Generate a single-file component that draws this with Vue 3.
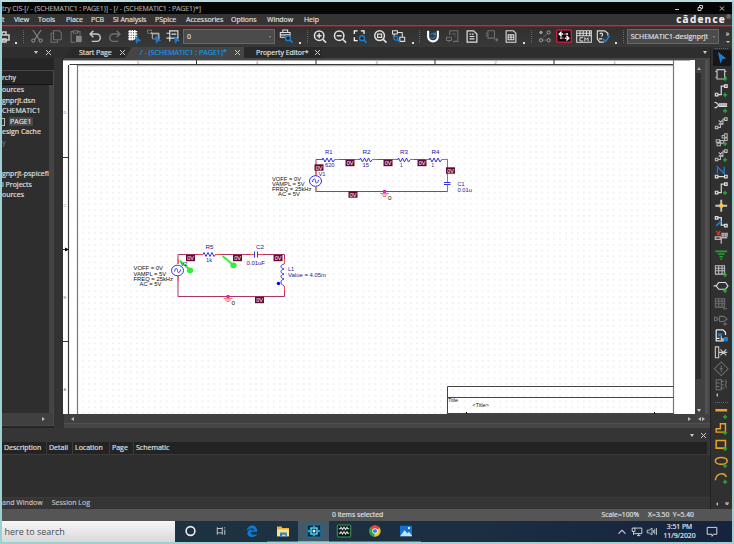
<script setup>
const L = '#dedede'
const D = '#707070'
const B = '#1c7ccc'
const G = '#25b32c'

const plus = `<path d="M10 13h5M12.500 10.500v5" stroke="${G}" stroke-width="1.500"/>`
const pointer = `<path d="M10 8l6 5-3 .4-2 3z" fill="${B}" stroke="${B}"/>`
const lens = `<circle cx="10.500" cy="10" r="3" fill="#222" stroke="${B}" stroke-width="1.800"/><path d="M13 12.500l3 3" stroke="${B}" stroke-width="2.200"/>`

const icons = {
  cut: `<g stroke="#8b8b8b" stroke-width="1.300"><path d="M3 0l8 12M13 0L5 12"/><circle cx="3.500" cy="13" r="2"/><circle cx="12.500" cy="13" r="2"/></g>`,
  copy: `<path d="M5 1h7l2.500 2.500V12H5zM5 4H2v11h8v-3" stroke="${D}" stroke-width="1.300"/>`,
  paste: `<path d="M5 2H2v13h5M10 2h3v4M5 1h5v3H5z" stroke="${D}" stroke-width="1.300"/><path d="M8 7h7v8H8z" fill="#858585"/>`,
  undo: `<path d="M6 1L2 5l4 4M2 5h8a4.500 4.500 0 0 1 0 9H4" stroke="#c9c9c9" stroke-width="1.800"/>`,
  redo: `<path d="M10 1l4 4-4 4M14 5H6a4.500 4.500 0 0 0 0 9h6" stroke="${D}" stroke-width="1.800"/>`,
  gridSnap: `<path d="M1 2h11M1 5h11M1 8h11M1 11h8M3 0v13M6 0v13M9 0v11" stroke="#fff" stroke-width="1.700"/>${pointer}`,
  areaSel: `<path d="M4 4h10v8M6 10V4" stroke="${L}" stroke-width="1.200"/><path d="M0 0h5v4H0z" stroke="#aaa" stroke-dasharray="1.500 1"/><path d="M6 5h7v6H6z" stroke="#999"/>${pointer}`,
  partSel: `<path d="M4 0v14M4 1h10v9H4M0 4h4M0 10h4M4 4h-3M6 5h6" stroke="${L}" stroke-width="1.400"/>${pointer}`,
  findPart: `<path d="M1 3h12v6H1zM4 3V0h6v3M1 6h12" stroke="${L}" stroke-width="1.300"/>${lens}`,
  zoomIn: `<circle cx="7" cy="7" r="5.800" stroke="${L}" stroke-width="1.900"/><path d="M11.500 11.500l4 4M4 7h6M7 4v6" stroke="${L}" stroke-width="1.900"/>`,
  zoomOut: `<circle cx="7" cy="7" r="5.800" stroke="${L}" stroke-width="1.900"/><path d="M11.500 11.500l4 4M4 7h6" stroke="${L}" stroke-width="1.900"/>`,
  zoomArea: `<path d="M1 5V1h4M9 1h4v4M1 9v4h4" stroke="#fff" stroke-width="1.500"/>${lens}`,
  zoomFit: `<circle cx="7.500" cy="7" r="6" stroke="${L}" stroke-width="1.800"/><path d="M12 11.500l4 4" stroke="${L}" stroke-width="2"/><path d="M5 5h5v4H5z" stroke="${L}" stroke-width="1.500"/>`,
  zoomSel: `<path d="M0 1h6v4H0zM9 9h6v5H9zM6 3h6v6M2 5v4" stroke="${L}" stroke-width="1.300"/><circle cx="4" cy="10" r="2.500" stroke="${B}" stroke-width="1.700"/><path d="M6 12l3 3" stroke="${B}" stroke-width="2"/>`,
  udesign: `<path d="M2 1v7a6 6 0 0 0 12 0V1" stroke="#fff" stroke-width="2.600"/><path d="M5 6a3.500 3 0 0 1 6-1M11 8a3.500 3 0 0 1-6 1M11 3v3H8" stroke="${B}" stroke-width="1.500"/>`,
  netlist: `<path d="M4 1h10v13H8M4 1v5M7 5h4M11 8h1M0 9h6v4H0zM3 13v2" stroke="${D}" stroke-width="1.300"/>`,
  report: `<path d="M2 1h8l4 4v10H2z" stroke="${L}" stroke-width="1.500"/><path d="M5 5h2M8 5h2M5 8h6M5 11h6" stroke="${L}" stroke-width="1.500"/>`,
  crossRef: `<path d="M3 1h8v9H3zM0 4h3M0 7h3M11 12h4l-2-2M15 12l-2 2" stroke="${D}" stroke-width="1.300"/>`,
  bom: `<path d="M2 1h9l3 3v11H2z" stroke="${L}" stroke-width="1.300"/><path d="M4.500 6h7v6h-7zM4.500 9h7M8 6v6" stroke="${L}" stroke-width="1.300"/>`,
  nets: `<g stroke="#b5b5b5"><circle cx="3" cy="3" r="1.500" fill="#888"/><circle cx="12.500" cy="3" r="2"/><circle cx="3" cy="12.500" r="2"/><circle cx="12.500" cy="12.500" r="2"/><path d="M6 9l4-4M6 12.500h4" stroke-dasharray="1 1"/></g>`,
  swap: `<rect x="-1" y="0" width="18" height="15" rx="1" fill="#050b12" stroke="#c41c3d" stroke-width="1.800"/><path d="M5 2L2 5l3 3M11 7l3 3-3 3M2 5h5M9 10h5M10 5h3M3 10h3" stroke="#fff" stroke-width="1.700"/><path d="M8 5h3M5 10h3" stroke="#cf2940" stroke-width="1.500"/>`,
  cm: `<path d="M-1 1h18v14H-1zM-1 4h18M-1 7h18M3 1v6M7 1v6M11 1v6M15 1v6" stroke="${L}" stroke-width="1.300"/><path d="M7 9.500H3v4h4M9 14V9.500l2 2 2-2V14" stroke="${L}" stroke-width="1.200"/>`,
  check: `<path d="M10 1H1v10l3 4h5M10 1l4 3v3M4 5c3-3 5 1 2 3M3 11h4" stroke="${L}" stroke-width="1.400"/><path d="M8 11l3 3 5-7" stroke="${B}" stroke-width="2"/>`,
  arrow: `<path d="M4 1l10 8-4.500 .5L7 15z" fill="${B}"/>`,
  part: `<path d="M3 2h9v11H3zM1 4h2M1 11h2M12 4h2M12 11h2" stroke="#c0c0c0" stroke-width="1.400"/>${plus}`,
  wire: `<path d="M1 11h3v3H1zM12 1h3v3h-3zM4 12.500h4v-10h4" stroke="${L}" stroke-width="1.400"/>${plus}`,
  bus: `<path d="M0 3h2l3 3h10M0 9h2l3-3M5 4.500h10M5 7.500h10" stroke="${L}" stroke-width="1.300"/>${plus}`,
  autoWire: `<path d="M1 11h3v3H1zM12 1h3v3h-3zM4 12.500h3v-4h3v-6h2M5 4l5 5M9 4l-4 5" stroke="#c0c0c0" stroke-width="1.200"/>`,
  autoPlus: `<path d="M1 11h3v3H1zM12 1h3v3h-3zM4 12.500h3v-4h3v-6h2M5 4l5 5M9 4l-4 5" stroke="#c0c0c0" stroke-width="1.200"/>${plus}`,
  blocks: `<path d="M2 8h4v3H2zM7 9h4v3H7zM3 12h4v3H3zM9 3h3v3H9zM12 1h3v4h-3zM12 6h3v3h-3z" stroke="#b8b8b8" stroke-width="1.200"/>${plus}`,
  netAlias: `<path d="M3.500 9V1l8 8V1" stroke="${B}" stroke-width="1.600"/><path d="M1 11h3v3H1zM12 11h3v3h-3zM4 12.500h8" stroke="${L}" stroke-width="1.400"/>`,
  junction: `<path d="M8 1v5M8 10v5M1 8h5M10 8h5" stroke="#c8c8c8" stroke-width="2.200"/><circle cx="8" cy="8" r="2.700" fill="#ffc43d"/>`,
  busEntry: `<path d="M1 2h3v3H1zM4 3h4v9h4M12 11h3v3h-3z" stroke="${L}" stroke-width="1.500"/><path d="M2 13l6-6" stroke="${B}" stroke-width="2"/>`,
  power: `<path d="M2 0l5 5M7 0L3 5" stroke="#df3528" stroke-width="1.700"/><path d="M1 7h6v3H1zM9 3h2v3H9zM13 3h2v3h-2zM7 8h8M8 9v6" stroke="#b0b0b0" stroke-width="1.600"/>`,
  ground: `<path d="M1 4h14M4 7.200h8M6 10.300h4M7 13.400h2" stroke="#1fa628" stroke-width="1.800"/>`,
  hier: `<path d="M1 2h11v10H1zM1 5h11M1 8h11M5 2v10M9 2v10" stroke="#c0c0c0" stroke-width="1.200"/>${plus}`,
  port: `<path d="M-1 7h3l3-4h8l3 4-3 4H5L2 7" stroke="${L}" stroke-width="1.300"/>${plus}`,
  hierDim: `<path d="M1 2h11v10H1zM1 5h11M1 8h11M5 2v10M9 2v10M10 14h5" stroke="${D}" stroke-width="1.200"/>`,
  pinDim: `<path d="M0 5h3v4H0zM3 7h3M6 4h5l4 3-4 3H6zM10 13h5M12.500 11v4" stroke="${D}" stroke-width="1.200"/>`,
  offpage: `<path d="M2 1h8l3 3v3M2 1v13h9M2 11h4" stroke="#e8e8e8" stroke-width="1.500"/><path d="M8 8v4h4" stroke="#eee" stroke-width="1.200"/><path d="M4 5h5v4H4zM11 9.500h5v5h-5z" fill="${B}"/>`,
  noConn: `<path d="M1 1h4v13H1zM5 7.500h10M7 4l7 7M14 4l-7 7" stroke="#c8c8c8" stroke-width="1.300"/>`,
  diamond: `<path d="M8 0l8 8-8 8-8-8zM8 4v8M6 8h4" stroke="${D}" stroke-width="1.200"/>`,
  pinArray: `<path d="M2 2h6v12H2zM8 4h3M8 8h3M8 12h3M2 6h4M2 10h4M13 2l1 3-1 3 1 4" stroke="${D}" stroke-width="1.200"/>`,
  line: `<path d="M1 5h14" stroke="#e8a22a" stroke-width="3"/>${plus}`,
  polyline: `<path d="M7 2h6v10H2V8h5z" stroke="#e8a22a" stroke-width="1.700"/>${plus}`,
  rect: `<path d="M2 3h11v9H2z" stroke="#e8a22a" stroke-width="1.800"/>${plus}`,
  ellipse: `<ellipse cx="8" cy="7" rx="7" ry="4" stroke="#e8a22a" stroke-width="1.800"/>${plus}`,
  arc: `<path d="M1 11c1-9 11-10 13-4" stroke="#e8a22a" stroke-width="1.700"/>${plus}`,
  cortana: `<circle cx="8" cy="8" r="5" stroke="#eee" stroke-width="1.800"/>`,
  taskview: `<path d="M2 2v12M10 2v12M2 4h8M2 11h8M14 6v8M14 2v2" stroke="#ccc" stroke-width="1.500"/>`,
  edge: `<path d="M1 8C2-2 15-2 15 9H6c1 6 6 4 8 3v2C7 19-1 14 3 8c1-2 3-3 5-3C5 4 3 5 1 8" fill="#0c7ad8"/><path d="M6 7c0-3 5-3 5 0z" fill="#1d303e"/>`,
  explorer: `<path d="M0 2h6l1 2h9v11H0z" fill="#efb63c"/><path d="M0 6h16v9H0z" fill="#ffe08a"/><path d="M4 10h9v6h-2v-3H7v3H4z" fill="#2f82ce"/>`,
  capture: `<rect x="-1" width="18" height="16" rx="1" fill="#062b42" stroke="#1688b5"/><path d="M4 4h8v8H4z" stroke="#5bd1ee" stroke-width="2"/><path d="M8 1v3M8 12v3M0 8h4M12 8h4" stroke="#27a7d5" stroke-width="3"/><circle cx="8" cy="8" r="2" fill="#dff8ff"/>`,
  pspice: `<rect x="-1" y="0" width="18" height="16" rx="1" fill="#071d1c" stroke="#48a35a" stroke-width="1.200"/><path d="M1 5h2l1-2 2 3 2-3 2 3 2-3 1 2h2M1 11h2l1-2 2 3 2-3 2 3 2-3 1 2h2" stroke="#e5e5e5" stroke-width="1.400"/>`,
  chrome: `<circle cx="8" cy="8" r="7.500" fill="#f5c62d"/><path d="M8 8L1.500 4A7.500 7.500 0 0 1 14.500 4z" fill="#e24335"/><path d="M8 8L1.500 4A7.500 7.500 0 0 0 7 15.500z" fill="#2ba24c"/><circle cx="8" cy="8" r="3.600" fill="#fff"/><circle cx="8" cy="8" r="2.800" fill="#3c7fe8"/>`,
  photos: `<path d="M0 1h16v14H0z" fill="#1670ce"/><path d="M0 15l6-8 4 4 2-2 4 5v1z" fill="#bfe5fb"/><circle cx="12" cy="4" r="1.500" fill="#fff"/>`,
  network: `<path d="M4 3h11v8H4M8 14h5M10.500 11v3M1 3h4v5H1zM3 8v5" stroke="#ddd" stroke-width="1.300"/>`,
  volume: `<path d="M1 6h3l4-3v10L4 10H1zM10 6v4M12 4v8M14.500 3v10" stroke="#ddd" stroke-width="1.200"/>`,
  caret: `<path d="M3 11l5-5 5 5" stroke="#ddd" stroke-width="1.500"/>`,
  notify: `<path d="M1 2h14v10h-5l-2 3v-3H1z" stroke="#ddd" stroke-width="1.400"/>`
}

const menu = ['View', 'Tools', 'Place', 'PCB', 'SI Analysis', 'PSpice', 'Accessories', 'Options', 'Window', 'Help']
const editTools = ['cut', 'copy', 'paste', 'undo', 'redo', 'gridSnap', 'areaSel', 'partSel']
const zoomTools = ['zoomIn', 'zoomOut', 'zoomArea', 'zoomFit', 'zoomSel']
const netTools = ['udesign', 'netlist', 'report', 'crossRef', 'bom']
const checkTools = ['nets', 'swap', 'cm', 'check']
const drawTools = ['arrow', 'part', 'wire', 'bus', 'autoWire', 'blocks', 'autoPlus', 'netAlias', 'wire', 'junction', 'busEntry', 'power', 'ground', 'hier', 'port', 'hierDim', 'pinDim', 'offpage', 'noConn', 'diamond', 'pinArray']
const shapeTools = ['line', 'polyline', 'rect', 'ellipse', 'arc']
const apps = ['cortana', 'taskview', 'edge', 'explorer', 'capture', 'pspice', 'chrome', 'photos']

const tree = [
  { t: 'ources' }, { t: 'gnprjt.dsn' }, { t: 'CHEMATIC1' }, { t: 'PAGE1', page: true },
  { t: 'esign Cache' }, { t: 'y', dim: true }, { t: '' }, { t: '' },
  { t: 'gnprjt-pspicefi' }, { t: 'l Projects' }, { t: 'ources' }
]
const columns = [['Description', 45], ['Detail', 26], ['Location', 37], ['Page', 24], ['Schematic', 50]]

const zigzags = [[322, 160], [359.500, 160], [397.500, 160], [429, 160], [203, 254.500]]
const zig = ([x, y]) => `M${x} ${y}l1 -2 2 4 2 -4 2 4 2 -4 2 4 1.500 -2`
const markers = [[319, 167.500], [350, 163], [388, 163], [422, 163], [450.500, 170.500], [353, 194.500], [190.500, 258], [237.500, 258], [278, 258], [259.500, 300]]
const names = [
  ['R1', 325, 154, 7.500], ['R2', 362.500, 154, 8], ['R3', 400, 154, 8], ['R4', 431.500, 154, 8],
  ['620', 325, 167.300, 9.500], ['15', 362.500, 167.300, 6.500], ['1', 400, 167.300, 2.500], ['1', 431.500, 167.300, 2.500],
  ['V1', 318.500, 175.500, 7], ['C1', 457.500, 186, 7], ['0.01u', 457.500, 192, 14.500],
  ['R5', 205.500, 249, 8], ['1k', 206, 262, 6], ['V2', 180.500, 265.500, 7], ['C2', 256, 249, 8],
  ['0.01uF', 246.500, 265, 18.500], ['L1', 288, 270.500, 6], ['Value = 4.05m', 288, 276.500, 38]
]
const notes = [
  ['VOFF = 0V', 272, 180.500, 29], ['VAMPL = 5V', 272, 186, 32.500], ['FREQ = 25kHz', 272, 191, 39.500], ['AC = 5V', 278, 196.300, 22],
  ['VOFF = 0V', 133.500, 270, 29.500], ['VAMPL = 5V', 133.500, 275.500, 32.500], ['FREQ = 25kHz', 133.500, 281, 39.500], ['AC = 5V', 139.500, 286, 22],
  ['0', 388, 200, 3.500], ['0', 231.500, 305, 3.500], ['Title', 448, 402, 10], ['<Title>', 472.500, 407.300, 16.500]
]
const rulerTop = [['5', 138], ['4', 257], ['3', 376.500], ['2', 495.500], ['1', 614.500]]
const rulerLeft = [['D', 114], ['C', 206.500], ['B', 299], ['A', 391]]
</script>

<template>
  <div class="window">
    <header class="titlebar">
      <span class="title">try CIS-[/ - (SCHEMATIC1 : PAGE1)] - [/ - (SCHEMATIC1 : PAGE1)*]</span>
      <svg class="winctl" width="52" height="10" fill="none" stroke="#ccc">
        <path d="M2 6.500h4M25 4.500h3v3h-3zM26.500 4v-1.500h3v3h-1.500M47 3.500l4 4M51 3.500l-4 4" />
      </svg>
    </header>

    <nav class="menubar">
      <span class="stub">t</span>
      <span v-for="m in menu" :key="m" class="menu" :class="'m-' + m.toLowerCase().replace(' ', '-')">{{ m }}</span>
      <span class="brand">cādence<sup>®</sup></span>
    </nav>

    <div class="toolbar">
      <svg class="printer" width="9" height="12" fill="none" stroke="#d0d0d0" stroke-width="1.500">
        <path d="M-2 4h9v5h-9M0 4V1h4v3M0 8h4v3h-4z" />
      </svg>
      <i class="drop first"></i><i class="grip"></i>
      <div class="group edit">
        <span v-for="n in editTools" :key="n" class="slot"><svg viewBox="0 0 16 16" fill="none" v-html="icons[n]"></svg></span>
      </div>
      <div class="combo value"><span>0</span><i class="tri"></i></div>
      <span class="slot find"><svg viewBox="0 0 16 16" fill="none" v-html="icons.findPart"></svg></span>
      <i class="drop"></i><i class="grip"></i>
      <div class="group zoom">
        <span v-for="n in zoomTools" :key="n" class="slot"><svg viewBox="0 0 16 16" fill="none" v-html="icons[n]"></svg></span>
      </div>
      <i class="drop"></i><i class="grip"></i>
      <div class="group net">
        <span v-for="n in netTools" :key="n" class="slot"><svg viewBox="0 0 16 16" fill="none" v-html="icons[n]"></svg></span>
      </div>
      <i class="drop"></i><i class="grip"></i>
      <div class="group checks">
        <span v-for="n in checkTools" :key="n" class="slot"><svg viewBox="0 0 16 16" fill="none" v-html="icons[n]"></svg></span>
      </div>
      <i class="drop"></i><i class="grip"></i>
      <div class="combo design"><span>SCHEMATIC1-designprjt</span><i class="tri"></i></div>
      <div class="more"><span>»</span><i class="tri"></i></div>
    </div>

    <div class="body">
      <div class="main">
        <div class="tabs">
          <div class="dockhead"><i class="tri"></i><span class="x"></span></div>
          <div class="tab start"><span>Start Page</span><span class="x"></span></div>
          <div class="tab active"><span>/ - (SCHEMATIC1 : PAGE1)*</span><span class="x"></span></div>
          <div class="tab prop"><span>Property Editor*</span><span class="x"></span></div>
          <i class="tri end"></i>
        </div>

        <div class="work">
          <aside class="dock">
            <div class="panel">
              <div class="ptitle">rchy</div>
              <div class="pbody">
                <ul class="tree">
                  <li v-for="(r, i) in tree" :key="i" :class="{ page: r.page, dim: r.dim }"><i v-if="r.page"></i><span>{{ r.t }}</span></li>
                </ul>
                <div class="pscroll"></div>
              </div>
              <div class="pfoot"><i class="rt"></i></div>
            </div>
          </aside>

          <section class="editor">
            <div class="sheet">
              <svg class="canvas" width="632" height="354" viewBox="63 60 632 354" fill="none">
                <defs>
                  <pattern id="dots" x="80.300" y="68" width="5.960" height="5.800" patternUnits="userSpaceOnUse">
                    <rect x="2.400" y="2.300" width="1.100" height="1.100" fill="#d5d5d5" />
                  </pattern>
                </defs>
                <path d="M63 60h632v354H63z" fill="#fff" />
                <path d="M78 66h594v348H78z" fill="url(#dots)" />
                <path d="M63 60.500h627" stroke="#b0b0b0" />
                <path d="M69.500 64.500h604M68.500 65v349" stroke="#3c3c3c" stroke-width="1.200" />
                <path d="M77.500 65v349M673.500 60v354" stroke="#777" stroke-width="1.200" />
                <path d="M78 65.700h595" stroke="#777" stroke-width=".7" />
                <path d="M196.500 60v5M316 60v5M435 60v5M554 60v5M63 157.500h6M63 249.500h6M63 341.500h6" stroke="#333" />
                <path d="M65 247.500l4 2-4 2z" fill="#000" />
                <g class="ruler">
                  <text v-for="[t, x] in rulerTop" :key="t" :x="x - 1" y="63.500">{{ t }}</text>
                  <text v-for="[t, y] in rulerLeft" :key="t" x="63.500" :y="y">{{ t }}</text>
                </g>
                <path d="M447.500 414v-27.500h226M447.500 397.500h226M447.500 413.500h226" stroke="#444" />
                <path d="M466.500 412v2M654.500 412v2" stroke="#111" />

                <g stroke="#ad3464">
                  <path d="M316 176v-16.500h6M334.500 159.500h25M372 159.500h26M410 159.500h19M441.500 159.500h6V182M447.500 185v6.500H316V187" />
                  <path d="M178 264v-9.500h25M215.500 254.500h39M257.500 254.500h27V264M284.500 286v10.500H178V276" />
                </g>
                <g stroke="#f0504c">
                  <path d="M316 176v-9M316 192v-5M334.500 159.500h5M355 159.500h4M372 159.500h5M393 159.500h5M410 159.500h4M425 159.500h4M441.500 159.500h6V182M447.500 185v6" />
                  <path d="M178 264v-5M178 281v-5M198 254.500h5M215.500 254.500h5M250 254.500h4M258 254.500h5M284.500 264v-5M284.500 286v5" />
                </g>
                <g stroke="#3434dc" stroke-width="1">
                  <path v-for="(z, i) in zigzags" :key="i" :d="zig(z)" />
                  <ellipse cx="315.500" cy="181" rx="6" ry="5.300" />
                  <path d="M312.500 182c1-5 3-3 3-1s2 4 3-1" />
                  <ellipse cx="177.500" cy="270.500" rx="6" ry="5.300" />
                  <path d="M174.500 271.500c1-5 3-3 3-1s2 4 3-1" />
                  <path d="M444 182.500h6.500M444 184.500h6.500M254.500 251.500v6M257.500 251.500v6" />
                  <path d="M284 264c-4 1-4 4 0 5c-4 1-4 4 0 5c-4 1-4 4 0 5c-4 1-4 5 0 7" />
                </g>
                <circle cx="278.500" cy="283.500" r="1.700" fill="#0000ea" />
                <g stroke="#f07d78">
                  <path d="M380 193.500h9M381.500 195h6M383 196.500h3M223.500 298.500h9M225 300h6M226.500 301.500h3" />
                </g>
                <path d="M383 190h3v3h-3zM226.500 295h3v3h-3z" fill="#f214d4" />
                <g v-for="([x, y], i) in markers" :key="i">
                  <rect :x="x - 4.500" :y="y - 3.200" width="9" height="6.400" fill="#650832" />
                  <text class="zero" :x="x - 3.300" :y="y + 2.100" textLength="6.800" lengthAdjust="spacingAndGlyphs">0V</text>
                </g>
                <g stroke="#36ec38" stroke-width="1.800">
                  <path d="M179.500 260.500l9 8M222.500 256l9 7.500" />
                  <ellipse cx="190" cy="270.300" rx="2.300" ry="2" fill="#36ec38" />
                  <ellipse cx="233.500" cy="265.300" rx="2.300" ry="2" fill="#36ec38" />
                </g>
                <g class="probe"><text x="194" y="272">V+</text><text x="238" y="267">V-</text></g>
                <g class="name"><text v-for="([t, x, y, w], i) in names" :key="i" :x="x" :y="y" :textLength="w" lengthAdjust="spacingAndGlyphs">{{ t }}</text></g>
                <g class="note"><text v-for="([t, x, y, w], i) in notes" :key="i" :x="x" :y="y" :textLength="w" lengthAdjust="spacingAndGlyphs">{{ t }}</text></g>
              </svg>
              <div class="vscroll"><i class="up"></i><div class="thumb"></div><i class="tri"></i></div>
            </div>
            <div class="hscroll"><i class="lf"></i><i class="rt"></i><i class="lf second"></i><i class="rt"></i></div>
          </section>
        </div>

        <section class="output">
          <div class="ohead"><i class="tri"></i><span class="x"></span></div>
          <div class="cols"><span v-for="[c, w] in columns" :key="c" :style="{ width: w + 'px' }">{{ c }}</span></div>
          <div class="obody"></div>
          <div class="otabs"><span>and Window</span><span>Session Log</span></div>
        </section>
      </div>

      <aside class="palette">
        <i class="dash"></i>
        <span v-for="(n, i) in drawTools" :key="i" class="tool" :class="{ on: i === 0 }"><svg viewBox="0 0 16 16" fill="none" v-html="icons[n]"></svg></span>
        <i class="lf"></i><i class="dash low"></i>
        <span v-for="n in shapeTools" :key="n" class="tool"><svg viewBox="0 0 16 16" fill="none" v-html="icons[n]"></svg></span>
        <div class="pend"><i class="lf"></i><span>»</span></div>
      </aside>
    </div>

    <footer class="status"><span class="sel">0 items selected</span><span class="scale">Scale=100%</span><span>X=3.50&nbsp; Y=5.40</span></footer>

    <div class="taskbar">
      <div class="search">e here to search</div>
      <div class="apps">
        <span v-for="n in apps" :key="n" class="app" :class="n"><svg viewBox="0 0 16 16" fill="none" v-html="icons[n]"></svg></span>
      </div>
      <div class="tray">
        <svg v-for="n in ['caret', 'network', 'volume']" :key="n" viewBox="0 0 16 16" fill="none" v-html="icons[n]"></svg>
        <div class="clock"><span>3:51 PM</span><span>11/9/2020</span></div>
        <svg class="bell" viewBox="0 0 16 16" fill="none" v-html="icons.notify"></svg>
      </div>
    </div>
  </div>
</template>

<style>
body { margin: 0; background: #9fcccf; overflow: hidden; }
</style>

<style scoped>
* { box-sizing: border-box; }
.window { width: 734px; height: 544px; border: 2px solid #9fd0d1; border-top-color: #bcdde0; display: flex; flex-direction: column; background: #333; color: #e2e2e2; font: 7px/1 "Open Sans", "Noto Sans", sans-serif; -webkit-text-stroke: .15px currentColor; white-space: nowrap; overflow: hidden; }
.titlebar { height: 12px; flex: none; background: #050505; display: flex; justify-content: space-between; align-items: center; padding-right: 7px; color: #aaa; }
.title { letter-spacing: -.11px; }
.menubar { height: 12px; flex: none; display: flex; align-items: center; background: #343434; border-bottom: 1px solid #d8233f; box-shadow: 0 1px 0 rgba(190, 30, 55, .45); position: relative; }
.stub { width: 12px; }
.menu { width: 30px; flex: none; letter-spacing: -.05px; }
.m-view { width: 24px; }
.m-tools { width: 28px; }
.m-place { width: 25px; }
.m-pcb { width: 22px; }
.m-si-analysis { width: 42px; }
.m-pspice { width: 31px; }
.m-accessories { width: 45px; }
.m-options { width: 36px; }
.m-window { width: 37px; }
.brand { margin-left: auto; font: 700 10px/11px "Open Sans", sans-serif; letter-spacing: 1.25px; color: #eee; margin-right: 1px; }
.brand sup { font-size: 6px; line-height: 1px; color: #888; letter-spacing: 0; }
.toolbar { height: 21px; flex: none; display: flex; align-items: center; background: linear-gradient(#303030, #383838); }
.slot { width: 19.5px; flex: none; display: flex; justify-content: center; }
.slot svg { width: 14px; height: 13px; overflow: visible; }
.group { display: flex; flex: none; }
.zoom .slot { width: 19.75px; }
.find { margin-left: 1px; }
.printer { flex: none; }
.drop { width: 2px; height: 2px; background: #ddd; margin: 12px 6px 0 3px; flex: none; }
.drop.first { margin: 12px 6px 0 4px; }
.grip { width: 1px; height: 13px; flex: none; background: repeating-linear-gradient(#666 0 1px, transparent 1px 2px); margin-right: 3px; }
.net + .drop, .checks + .drop { margin: 12px 6px 0 2px; }
.zoom + .drop { margin: 12px 5px 0 3px; }
.combo { height: 15px; flex: none; display: flex; align-items: center; justify-content: space-between; background: #4b4b4b; border: 1px solid #686868; padding: 0 3px; }
.combo.value { width: 92px; }
.combo.design { width: 92px; }
.tri, .up, .lf, .rt { width: 0; height: 0; flex: none; border: 2.5px solid transparent; }
.tri { border-top: 3px solid #ccc; border-bottom: 0; }
.up { border-bottom: 3px solid #aaa; border-top: 0; }
.lf { border-right: 3px solid #bbb; border-left: 0; }
.rt { border-left: 3px solid #bbb; border-right: 0; }
.combo .tri { border-width: 2px 1.5px 0; border-top-color: #999; }
.more { margin-left: auto; width: 9px; display: flex; flex-direction: column; gap: 4px; align-items: center; }
.more .tri { border-width: 2px 2px 0; }
.x { width: 5px; height: 5px; flex: none; background: linear-gradient(45deg, transparent 43%, #ccc 43% 57%, transparent 57%), linear-gradient(-45deg, transparent 43%, #ccc 43% 57%, transparent 57%); }
.body { flex: 1; min-height: 0; display: flex; }
.main { width: 708px; flex: none; display: flex; flex-direction: column; }
.tabs { height: 11px; flex: none; display: flex; background: #2e2e2e; align-items: center; }
.dockhead { width: 63px; display: flex; gap: 8px; padding-left: 32px; align-items: center; }
.tab { height: 11px; display: flex; align-items: center; justify-content: space-between; background: #292929; letter-spacing: -.06px; }
.tab.start { width: 60px; padding: 0 0 0 14px; clip-path: polygon(7px 0, 100% 0, 100% 100%, 0 100%); }
.tab.active { width: 119px; background: #454545; color: #0b9cf5; padding: 0 4px 0 15px; clip-path: polygon(7px 0, 100% 0, 100% 100%, 0 100%); font-size: 7.1px; letter-spacing: 0; }
.tab.prop { width: 78px; padding: 0 2px 0 12px; }
.tabs .end { margin-left: auto; margin-right: 3px; }
.work { height: 370px; flex: none; display: flex; }
.dock { width: 52px; padding-top: 12px; background: #252525; }
.panel { height: 356px; border: 1px solid #484848; border-left: 0; display: flex; flex-direction: column; }
.ptitle { height: 13px; padding: 3px 0 0; background: #252525; }
.pbody { flex: 1; display: flex; border-top: 1px solid #111; }
.tree { width: 47px; margin: 0; padding: 0; list-style: none; background: #2e2e2e; overflow: hidden; }
.tree li { height: 10.55px; line-height: 10px; display: flex; }
.tree .page { gap: 4px; align-items: flex-start; }
.tree .page i { width: 3px; height: 8px; margin-top: 1px; border: 1px solid #bbb; border-left: 0; }
.tree .page span { background: #474747; padding: 0 1px; line-height: 9px; }
.tree .dim { color: #777; }
.pscroll { flex: 1; background: #444; }
.pfoot { height: 12px; background: #404040; display: flex; align-items: center; padding-left: 40px; }
.editor { margin-left: auto; width: 646px; display: flex; flex-direction: column; background: #464646; padding-top: 2px; }
.sheet { height: 354px; display: flex; flex: none; }
.canvas { display: block; flex: none; margin-left: -1px; -webkit-text-stroke: 0; }
.vscroll { width: 13px; background: #404040; display: flex; flex-direction: column; align-items: center; padding: 7px 3px 2px 0; border-right: 3px solid #505050; }
.thumb { width: 5px; height: 306px; margin-top: 3px; background: #2d2d2d; }
.vscroll .tri { margin-top: auto; }
.hscroll { height: 10px; display: flex; align-items: center; padding: 0 5px 0 7px; background: #404040; border-bottom: 1px solid #505050; gap: 1px; }
.hscroll .rt:nth-child(2) { margin-left: auto; margin-right: 6px; }
.ruler text { font: 4px "Liberation Sans", sans-serif; fill: #777; }
.zero { font: 6px "Liberation Sans", sans-serif; fill: #fff; }
.name text { font: 6px "Liberation Sans", sans-serif; fill: #20209a; }
.note text { font: 6px "Liberation Sans", sans-serif; fill: #111; }
.probe text { font: 4px "Liberation Sans", sans-serif; fill: #a9efab; }
.output { flex: 1; display: flex; flex-direction: column; background: #353535; }
.ohead { height: 14px; display: flex; justify-content: flex-end; align-items: center; gap: 7px; padding: 0 4px 0 0; }
.cols { height: 12px; display: flex; background: #232323; align-items: center; margin-right: 3px; }
.cols span { height: 12px; line-height: 12px; padding-left: 2px; border-right: 1px solid #3b3b3b; flex: none; }
.cols span:last-child { border: 0; }
.obody { height: 43px; background: #2e2e2e; border-top: 1px solid #3b3b3b; }
.otabs { flex: 1; display: flex; align-items: center; gap: 9px; color: #c4c4c4; border-top: 1px solid #3b3b3b; padding-bottom: 2px; }
.palette { flex: 1; background: #303030; border-left: 1px solid #222; display: flex; flex-direction: column; align-items: center; }
.dash { width: 14px; height: 1px; background: repeating-linear-gradient(90deg, #666 0 1px, transparent 1px 2px); margin: 1px 0 1px; flex: none; }
.dash.low { margin: 5px 0 1px; }
.tool { width: 18px; height: 16.35px; flex: none; display: flex; align-items: center; justify-content: center; }
.tool.on { background: #171717; }
.tool svg { width: 14.5px; height: 13.5px; overflow: visible; }
.palette > .lf { margin: 0 10px 0 0; border-width: 2px 2px 2px 0; }
.pend { margin-top: auto; width: 18px; height: 11px; display: flex; align-items: center; justify-content: space-between; padding: 0 1px 0 3px; }
.pend .lf { border-width: 2px 2px 2px 0; }
.pend span { transform: rotate(90deg); }
.status { height: 12px; flex: none; background: #555; display: flex; align-items: center; font-size: 6.8px; padding-right: 38px; }
.sel { margin-left: 330px; }
.scale { margin-left: auto; margin-right: 9px; }
.taskbar { height: 21px; flex: none; display: flex; background: linear-gradient(90deg, #1e3541, #1c2e42 65%, #15233e); }
.search { width: 173px; background: linear-gradient(#f6f6f6, #d9d9d9); color: #4a4a4a; font-size: 9px; line-height: 21px; text-indent: -5px; overflow: hidden; -webkit-text-stroke: 0; }
.apps { display: flex; }
.app { width: 30.8px; display: flex; align-items: center; justify-content: center; border-bottom: 1px solid transparent; }
.app svg { width: 14px; height: 12px; overflow: visible; }
.app.cortana svg { width: 15px; height: 14px; }
.app.taskview svg { width: 12px; height: 10px; }
.app.explorer, .app.pspice, .app.chrome, .app.photos { border-bottom-color: #4f7895; }
.app.capture { background: #42596a; border-bottom-color: #79aed3; }
.tray { margin-left: auto; display: flex; align-items: center; gap: 3px; padding-right: 14px; }
.tray svg { width: 12px; height: 11px; overflow: visible; }
.clock { width: 35px; display: flex; flex-direction: column; align-items: center; gap: 2px; color: #eee; margin: 0 6px 0 1px; font-size: 6.8px; }
</style>
